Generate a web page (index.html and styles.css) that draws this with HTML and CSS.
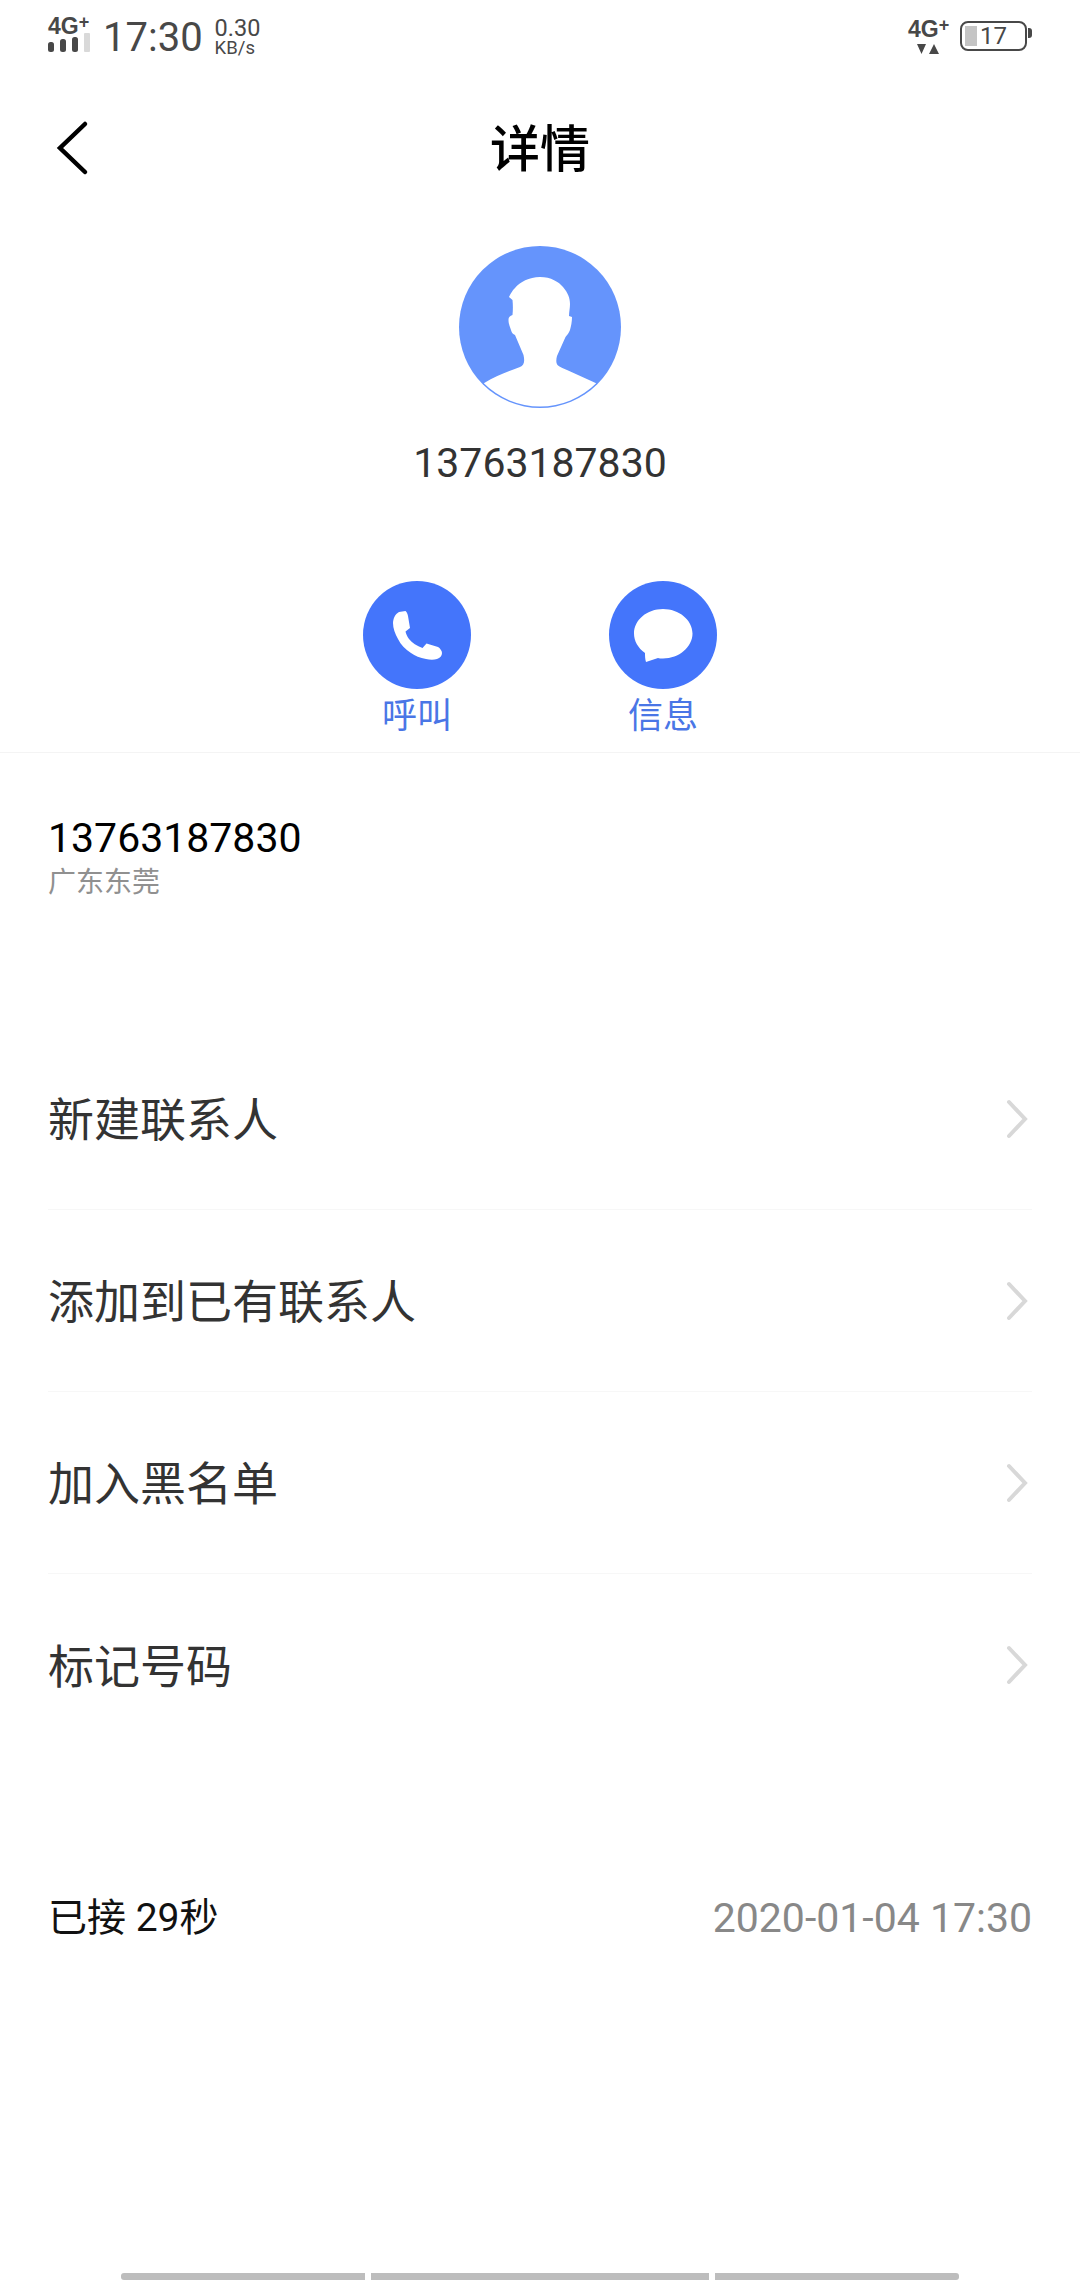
FILE: index.html
```html
<!DOCTYPE html>
<html lang="zh">
<head>
<meta charset="utf-8">
<title>详情</title>
<link rel="stylesheet" href="styles.css">
</head>
<body>
<div class="page">
  <header class="status">
    <div class="status-left">
      <div class="net">
        <span class="net-label">4G<sup>+</sup></span>
        <svg class="bars" width="42" height="19" viewBox="0 0 42 19"><rect x="0" y="9" width="6" height="10" rx="2.500" fill="#484848"/><rect x="12" y="6" width="6" height="13" rx="2.500" fill="#484848"/><rect x="24" y="4" width="6" height="15" rx="2.500" fill="#484848"/><rect x="36" y="0" width="6" height="19" rx="1" fill="#d9d9d9"/></svg>
      </div>
      <span class="clock">17:30</span>
      <div class="speed"><span>0.30</span><span class="speed-unit">KB/s</span></div>
    </div>
    <div class="status-right">
      <div class="net net-right">
        <span class="net-label">4G<sup>+</sup></span>
        <svg class="arrows" width="22" height="10" viewBox="0 0 22 10"><path d="M0 0h9L4.500 10z M12 10h10L17 0z" fill="#484848"/></svg>
      </div>
      <div class="battery"><span class="battery-level"></span><span class="battery-num">17</span></div>
    </div>
  </header>

  <nav class="nav">
    <svg class="back" width="34" height="56" viewBox="0 0 34 56"><path d="M29 4 4 28l25 24" fill="none" stroke="#000" stroke-width="4.500" stroke-linecap="round"/></svg>
    <h1 class="title">详情</h1>
  </nav>

  <section class="profile">
    <svg class="avatar" width="162" height="162" viewBox="0 0 162 162">
      <circle cx="81" cy="81" r="81" fill="#6594fc"/>
      <path fill="#fff" d="M24.800 137.200C38 129 50 125 61 121C65 119 66 116 64.500 109L56 89C54 88 53 87 52.500 85.500C51 81 49.500 78 49.500 74C49.500 71 51 70 53.500 69C54 64 54 59 53.500 54L50 51C52 47 53 45 56 42C61 36 70 31 81 31C92 31 100 36 104 41C109 47 111 52 111 58C111 62 110 66 110 70L113 71C113 76 112 80 111 84C110 87 108 89 106.500 91L98 110C97 114 97 117 98.500 119C100 121 104 122 108 124L137.200 137.200A79.400 79.400 0 0 1 24.800 137.200Z"/>
    </svg>
    <div class="profile-number">13763187830</div>
  </section>

  <section class="actions">
    <div class="action">
      <span class="action-circle">
        <svg width="49" height="49" viewBox="0 0 49 49"><path fill="#fff" d="M6 1L12.500 0C14 1 14.500 3 15 5L17 17L12.500 20.500C13 23 14 25 16 28C19 32 24 35 29.500 37L33.500 32.500L45 36C47 37 49 40 49 42C49 45 47 47 44 48C41 49 37 49 33 48C27 47 22 45 18 42C12 38 8 34 5 28C2 23 0 17 0 12C0 8 2 3 6 1Z"/></svg>
      </span>
      <span class="action-label">呼叫</span>
    </div>
    <div class="action">
      <span class="action-circle">
        <svg width="59" height="53" viewBox="0 0 59 53"><path fill="#fff" d="M29 0C45 0 58.500 11 58.500 24.500C58.500 38 45 49.500 29 49.500C27 49.500 25 49.500 24 49L12 53C11 50 11 47 11 44C4 39 0 32 0 24.500C0 11 13 0 29 0Z"/></svg>
      </span>
      <span class="action-label">信息</span>
    </div>
  </section>

  <section class="phone">
    <div class="phone-number">13763187830</div>
    <div class="phone-region">广东东莞</div>
  </section>

  <section class="menu">
    <div class="menu-row"><span class="menu-label">新建联系人</span><svg class="chev" width="22" height="40" viewBox="0 0 22 40"><path d="M3 3l16 17L3 37" fill="none" stroke="#d8d8d8" stroke-width="4" stroke-linecap="round"/></svg></div>
    <div class="menu-row"><span class="menu-label">添加到已有联系人</span><svg class="chev" width="22" height="40" viewBox="0 0 22 40"><path d="M3 3l16 17L3 37" fill="none" stroke="#d8d8d8" stroke-width="4" stroke-linecap="round"/></svg></div>
    <div class="menu-row"><span class="menu-label">加入黑名单</span><svg class="chev" width="22" height="40" viewBox="0 0 22 40"><path d="M3 3l16 17L3 37" fill="none" stroke="#d8d8d8" stroke-width="4" stroke-linecap="round"/></svg></div>
    <div class="menu-row"><span class="menu-label">标记号码</span><svg class="chev" width="22" height="40" viewBox="0 0 22 40"><path d="M3 3l16 17L3 37" fill="none" stroke="#d8d8d8" stroke-width="4" stroke-linecap="round"/></svg></div>
  </section>

  <section class="record">
    <span class="record-state">已接 29秒</span>
    <span class="record-time">2020-01-04 17:30</span>
  </section>

  <footer class="gesture">
    <span class="gesture-bar left"></span>
    <span class="gesture-bar mid"></span>
    <span class="gesture-bar right"></span>
  </footer>
</div>
</body>
</html>
```

FILE: styles.css
```css
* { box-sizing: border-box; }
html, body { margin: 0; padding: 0; background: #fff; }
.page {
  width: 1080px;
  height: 2280px;
  display: flex;
  flex-direction: column;
  font-family: Roboto, "Noto Sans CJK SC", sans-serif;
  color: #333;
  overflow: hidden;
}
.status {
  height: 72px;
  padding: 15px 48px 0;
  display: flex;
  justify-content: space-between;
  align-items: flex-start;
  color: #484848;
}
.status-left, .status-right { display: flex; align-items: flex-start; }
.net { width: 42px; display: flex; flex-direction: column; }
.net-label { font-family: "Liberation Sans", sans-serif; font-size: 23px; line-height: 22px; font-weight: 700; white-space: nowrap; }
.net-label sup { font-size: 18px; line-height: 0; vertical-align: 6px; }
.bars { margin-top: -4px; display: block; overflow: visible; }
.clock { font-size: 40px; line-height: 46px; margin-left: 13px; }
.speed { display: flex; flex-direction: column; margin-left: 12px; padding-top: 3px; font-size: 23.500px; line-height: 20px; }
.speed-unit { font-size: 18.500px; line-height: 20px; }
.net-right { margin-top: 3px; margin-left: 3px; margin-right: 10px; }
.arrows { margin: 4px 0 0 9px; display: block; }
.battery {
  position: relative;
  width: 67px;
  height: 30px;
  margin-top: 6px;
  margin-right: 5px;
  border: 2.500px solid #484848;
  border-radius: 8px;
  display: flex;
  align-items: center;
}
.battery::after {
  content: "";
  position: absolute;
  right: -7px;
  top: 5px;
  width: 4px;
  height: 10px;
  background: #484848;
  border-radius: 0 3px 3px 0;
}
.battery-level { width: 12px; height: 20px; margin-left: 3px; background: #c4c4c4; }
.battery-num { font-size: 24px; line-height: 24px; margin-left: 3px; }

.nav {
  height: 152px;
  padding-left: 56px;
  display: grid;
  grid-template-columns: 1fr auto 1fr;
  grid-template-areas: "back title .";
  align-items: center;
}
.back { grid-area: back; display: block; }
.title { grid-area: title; margin: 3px 0 0 -56px; font-size: 50px; line-height: 76px; font-weight: 500; color: #000; }

.profile { display: flex; flex-direction: column; align-items: center; padding-top: 22px; }
.avatar { display: block; }
.profile-number { margin-top: 31px; font-size: 41px; line-height: 48px; color: #333; }

.actions {
  display: flex;
  justify-content: center;
  gap: 138px;
  padding-top: 94px;
  height: 266px;
  border-bottom: 1px solid #f4f4f4;
}
.action { width: 108px; display: flex; flex-direction: column; align-items: center; }
.action-circle {
  width: 108px;
  height: 108px;
  border-radius: 50%;
  background: #4475fb;
  display: flex;
  align-items: center;
  justify-content: center;
}
.action-label { font-size: 35px; line-height: 50px; margin-top: 3px; color: #4a76e6; white-space: nowrap; }

.phone { padding: 61px 48px 0; height: 275px; }
.phone-number { font-size: 41px; line-height: 48px; color: #000; }
.phone-region { font-size: 28px; line-height: 36px; margin-top: 3px; color: #909090; }

.menu { padding: 0 48px; display: flex; flex-direction: column; }
.menu-row {
  height: 182px;
  display: flex;
  align-items: center;
  justify-content: space-between;
  font-size: 46px;
  color: #333;
  border-bottom: 1px solid #f7f7f7;
}
.menu-row:last-child { border-bottom: 0; }
.menu-label { margin-bottom: 5px; }
.chev { display: block; margin-right: 4px; }

.record {
  padding: 138px 48px 0;
  display: flex;
  justify-content: space-between;
  align-items: center;
}
.record-state { font-size: 39px; line-height: 48px; color: #111; }
.record-time { font-size: 41px; line-height: 48px; color: #888; }

.gesture {
  margin-top: auto;
  padding-left: 121px;
  height: 7px;
  display: flex;
  gap: 6px;
}
.gesture-bar { height: 7px; background: #bdbdbd; display: block; }
.left { width: 244px; border-radius: 3px 0 0 3px; }
.mid { width: 338px; }
.right { width: 244px; border-radius: 0 3px 3px 0; }
```
